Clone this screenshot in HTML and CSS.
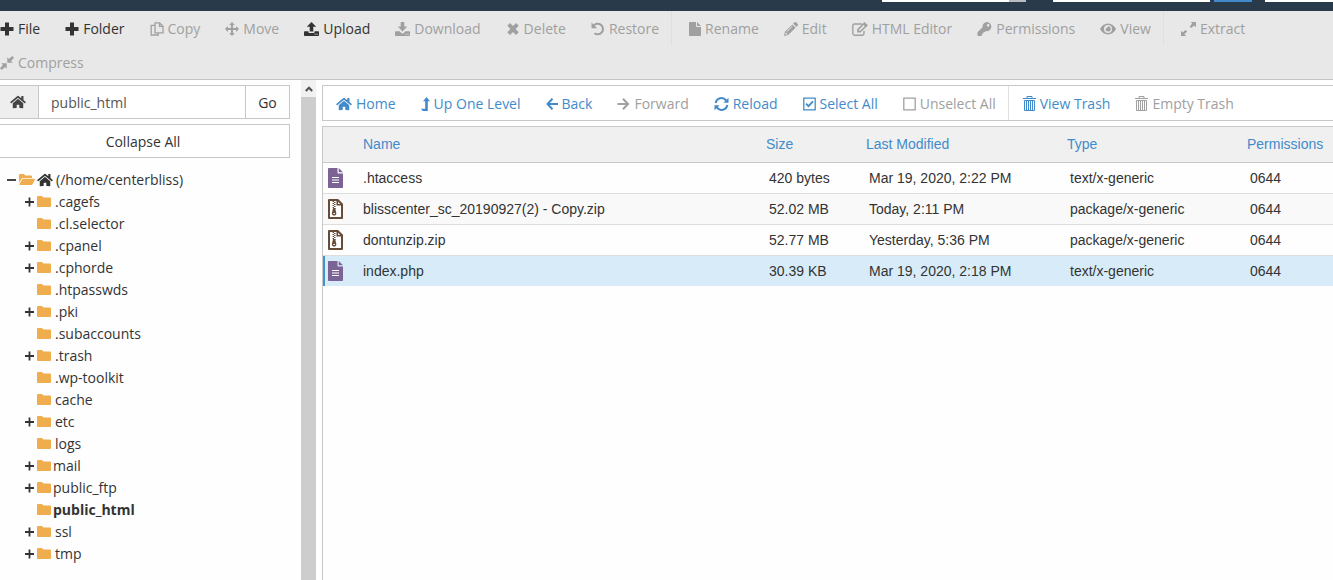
FILE: index.html
```html
<!DOCTYPE html>
<html lang="en">
<head>
<meta charset="utf-8">
<title>File Manager</title>
<link rel="stylesheet" href="styles.css">
</head>
<body>
<svg class="sprite" aria-hidden="true">
  <symbol id="plus" viewBox="0 0 14 14"><path d="M5 .5h4V5h4.500v4H9v4.500H5V9H.5V5H5z"/></symbol>
  <symbol id="copy" viewBox="0 0 14 14"><path fill="none" stroke="currentColor" stroke-width="1.300" d="M4.500 3.400H1.200v9.600h7V11M9.600.8H5v10h8V4.200L9.600.8zM9.500 1v3.400H13"/></symbol>
  <symbol id="move" viewBox="0 0 14 14"><path d="M7 0l2.900 2.900H8V6h3.100V4.100L14 7l-2.900 2.900V8H8v3.100h1.900L7 14l-2.900-2.900H6V8H2.900v1.900L0 7l2.900-2.900V6H6V2.900H4.100z"/></symbol>
  <symbol id="upload" viewBox="0 0 15 14"><path d="M7.500 0l4.700 4.800H9.300v4.700H5.700V4.800H2.800zM.7 9.300h3.800v.9c0 .4.300.7.700.7h4.600c.4 0 .7-.3.700-.7v-.9h3.800c.4 0 .7.300.7.700v3.300c0 .4-.3.700-.7.700H.7c-.4 0-.7-.3-.7-.7V10c0-.4.300-.7.700-.7zM10.600 11.700v1h1v-1zM12.600 11.700v1h1v-1z" fill-rule="evenodd"/></symbol>
  <symbol id="download" viewBox="0 0 15 14"><path d="M5.700 0h3.600v4.600h2.900L7.500 9.400 2.800 4.600h2.900zM.7 9.200h3.900l1.700 1.700c.7.700 1.700.7 2.400 0l1.700-1.700h3.900c.4 0 .7.300.7.700v3.400c0 .4-.3.700-.7.700H.7c-.4 0-.7-.3-.7-.7V9.900c0-.4.300-.7.700-.7zM10.600 11.700v1h1v-1zM12.600 11.700v1h1v-1z" fill-rule="evenodd"/></symbol>
  <symbol id="times" viewBox="0 0 12 14"><path d="M3 1l3 3 3-3 2.700 2.700L8.600 7l3.100 3.300L9 13l-3-3-3 3L.3 10.300 3.400 7 .3 3.700z"/></symbol>
  <symbol id="undo" viewBox="0 0 14 14"><path fill="none" stroke="currentColor" stroke-width="2" d="M2.200 4.200A5.300 5.300 0 1 1 3.400 11.200"/><path d="M.5.500v5.700h5.700z"/></symbol>
  <symbol id="file" viewBox="0 0 12 14"><path d="M1 0h6v4c0 .6.400 1 1 1h4v8.200c0 .5-.3.800-.8.800H.8c-.5 0-.8-.3-.8-.8V1c0-.6.400-1 1-1zM8 0l4 4H8z"/></symbol>
  <symbol id="pencil" viewBox="0 0 14 14"><path d="M8.300 2.400l3.300 3.300-7.400 7.400L0 14l.9-4.200zM9.100 1.600L10.200.5c.7-.7 1.500-.7 2.100 0l1.200 1.200c.7.700.7 1.500 0 2.100l-1.100 1.100zM1.800 10.200l-.4 2.400 2.400-.4zM8 4l-5.300 5.300.5.500L8.500 4.500z" fill-rule="evenodd"/></symbol>
  <symbol id="edit" viewBox="0 0 16 14"><path fill="none" stroke="currentColor" stroke-width="1.400" d="M10 2H2.500C1.500 2 .8 2.700.8 3.600v7.900c0 1 .7 1.700 1.700 1.700h7.800c1 0 1.700-.7 1.700-1.700V9"/><path d="M12.400 0L16 3.300 8.500 10.500H5.200V7.200zM11.500 3L6.700 7.900l1.200 1.200 4.900-4.800z" fill-rule="evenodd"/></symbol>
  <symbol id="key" viewBox="0 0 14 14"><path d="M9.400 0A4.600 4.600 0 1 1 8.300 9.100L7.400 10H6v1.500H4.500V13L3.800 14H.5L0 13.500v-3.200l5-5A4.600 4.600 0 0 1 9.400 0zM10.600 2a1.300 1.300 0 1 0 0 2.700 1.300 1.300 0 0 0 0-2.700z" fill-rule="evenodd"/></symbol>
  <symbol id="eye" viewBox="0 0 16 14"><path fill-rule="evenodd" d="M8 1.500c3.500 0 6.300 2.100 8 5.500-1.700 3.400-4.500 5.500-8 5.500S1.700 10.400 0 7c1.700-3.400 4.500-5.500 8-5.500zM8 3a4 4 0 1 0 0 8 4 4 0 0 0 0-8zM8 4.300c-.2.900-.8 1.900-2.400 2.400A2.600 2.600 0 1 0 8 4.300z"/></symbol>
  <symbol id="expand" viewBox="0 0 15 14"><path d="M9.500 0H15v5.200l-1.800-1.800-3 2.700-1.600-1.600 2.800-2.900zM0 8.800l1.700 1.700 2.800-2.600 1.600 1.600-2.800 2.700L5.200 14H0z"/></symbol>
  <symbol id="compress" viewBox="0 0 14 14"><path d="M7.300 1.200l1.700 1.700L12.200 0 14 1.800 11.100 5l1.700 1.700H7.300zM1.200 7.300h5.500v5.500L5 11.100 1.800 14 0 12.200 2.900 9z"/></symbol>
  <symbol id="home" viewBox="0 0 576 512"><path d="M280.370 148.260L96 300.110V464a16 16 0 0 0 16 16l112.060-.29a16 16 0 0 0 15.920-16V368a16 16 0 0 1 16-16h64a16 16 0 0 1 16 16v95.640a16 16 0 0 0 16 16.050L464 480a16 16 0 0 0 16-16V300L295.670 148.260a12.190 12.190 0 0 0-15.300 0zM571.600 251.470L488 182.560V44.050a12 12 0 0 0-12-12h-56a12 12 0 0 0-12 12v72.610L318.470 43a48 48 0 0 0-61 0L4.340 251.470a12 12 0 0 0-1.600 16.900l25.500 31A12 12 0 0 0 45.150 301l235.220-193.740a12.190 12.190 0 0 1 15.300 0L530.900 301a12 12 0 0 0 16.900-1.600l25.500-31a12 12 0 0 0-1.700-16.930z"/></symbol>
  <symbol id="up" viewBox="0 0 9 14"><path d="M5.500 0L9 4.300H6.800V14H1.700L0 11.700h4.200V4.300H2z"/></symbol>
  <symbol id="left" viewBox="0 0 12 14"><path fill="none" stroke="currentColor" stroke-width="2" d="M6.500 1.800L1.500 7l5 5.200M1.700 7H12"/></symbol>
  <symbol id="right" viewBox="0 0 12 14"><path fill="none" stroke="currentColor" stroke-width="2" d="M5.500 1.800l5 5.200-5 5.200M10.300 7H0"/></symbol>
  <symbol id="reload" viewBox="0 0 14 14"><path fill="none" stroke="currentColor" stroke-width="2" d="M1.200 6A5.800 5.800 0 0 1 11.700 3.600M12.800 8A5.800 5.800 0 0 1 2.300 10.400"/><path d="M14 .7v5H9zM0 13.300v-5h5z"/></symbol>
  <symbol id="checked" viewBox="0 0 13 14"><path fill="none" stroke="currentColor" stroke-width="1.300" d="M.8 1.200h11.400v11.600H.8z"/><path fill="none" stroke="currentColor" stroke-width="1.800" d="M3 6.600l2.500 2.600L10 4.400"/></symbol>
  <symbol id="unchecked" viewBox="0 0 13 14"><path fill="none" stroke="currentColor" stroke-width="1.300" d="M.8 1.200h11.400v11.600H.8z"/></symbol>
  <symbol id="trash" viewBox="0 0 13 16"><path fill="none" stroke="currentColor" d="M0 2.500h13M4 2V.5h5V2M1.500 4.500h10v10h-10zM3.500 5v9M5.500 5v9M7.500 5v9M9.500 5v9"/></symbol>
  <symbol id="folder" viewBox="0 0 14 12"><path d="M1.200 0H5l1.600 1.500h6.200c.7 0 1.200.5 1.200 1.100v7.300c0 .6-.5 1.100-1.200 1.100H1.200C.5 11 0 10.500 0 9.900V1.100C0 .5.500 0 1.200 0z"/></symbol>
  <symbol id="folder-open" viewBox="0 0 16 12"><path d="M0 8.800V1.200C0 .5.500 0 1.200 0h3.600l1.500 1.500h5.500c.7 0 1.200.5 1.200 1.200v1.200H4.300c-.8 0-1.500.4-1.900 1zM4.300 4.700h11c.5 0 .8.500.6.900l-2.300 4.700c-.2.400-.6.700-1.100.7H1c-.5 0-.8-.5-.6-.9l2.700-4.700c.2-.4.700-.7 1.200-.7z"/></symbol>
  <symbol id="text-file" viewBox="0 0 15 20"><path fill="#7c6396" d="M1 0h8.500v4.500c0 .6.400 1 1 1H15V19c0 .6-.4 1-1 1H1c-.6 0-1-.4-1-1V1c0-.6.400-1 1-1zM10.700 0L15 4.300h-4.300z"/><path stroke="#fff" stroke-width="1.200" d="M4 9.500h7M4 12h7M4 14.500h7"/></symbol>
  <symbol id="zip-file" viewBox="0 0 15 20"><path fill="#fff" stroke="#654b38" stroke-width="2" stroke-linejoin="round" d="M1 1h8.700L14 5.300V19H1z"/><path fill="none" stroke="#654b38" stroke-width="1.600" d="M9.300 1v4.800H14"/><path fill="none" stroke="#654b38" stroke-width="1.500" stroke-dasharray="1 1" d="M5.300 2v8M6.800 3v7"/><path fill="#654b38" d="M5 9h2.200l1.100 5.200c.3 3.200-4.700 3.200-4.400 0z"/><path stroke="#fff" d="M5.300 14.500h1.700"/></symbol>
  <symbol id="node-plus" viewBox="0 0 9 10"><path stroke="currentColor" stroke-width="1.800" d="M0 5h9M4.500.5v9"/></symbol>
  <symbol id="node-minus" viewBox="0 0 9 10"><path stroke="currentColor" stroke-width="1.800" d="M0 5h9"/></symbol>
  <symbol id="chevron" viewBox="0 0 8 6"><path fill="none" stroke="currentColor" stroke-width="2" d="M.8 5L4 1.700 7.200 5"/></symbol>
</svg>

<header class="topbar">
  <select class="search-scope" aria-label="Search scope"></select>
  <input class="search-text" type="text" aria-label="Search">
  <button class="search-go" type="button" aria-label="Search"></button>
  <button class="settings" type="button" aria-label="Settings"></button>
</header>

<nav class="toolbar">
  <div class="actions">
    <button class="action"><svg class="w14"><use href="#plus"/></svg>File</button>
    <button class="action"><svg class="w14"><use href="#plus"/></svg>Folder</button>
    <button class="action" disabled><svg class="w14"><use href="#copy"/></svg>Copy</button>
    <button class="action" disabled><svg class="w14"><use href="#move"/></svg>Move</button>
    <button class="action"><svg class="w15"><use href="#upload"/></svg>Upload</button>
    <button class="action" disabled><svg class="w15"><use href="#download"/></svg>Download</button>
    <button class="action" disabled><svg class="w14"><use href="#times"/></svg>Delete</button>
    <button class="action" disabled><svg class="w14"><use href="#undo"/></svg>Restore</button>
    <button class="action divided" disabled><svg class="w12"><use href="#file"/></svg>Rename</button>
    <button class="action" disabled><svg class="w14"><use href="#pencil"/></svg>Edit</button>
    <button class="action" disabled><svg class="w16"><use href="#edit"/></svg>HTML Editor</button>
    <button class="action" disabled><svg class="w15"><use href="#key"/></svg>Permissions</button>
    <button class="action" disabled><svg class="w16"><use href="#eye"/></svg>View</button>
    <button class="action divided" disabled><svg class="w15"><use href="#expand"/></svg>Extract</button>
    <button class="action" disabled><svg class="w14"><use href="#compress"/></svg>Compress</button>
  </div>
</nav>

<div class="workspace">
  <aside class="sidebar">
    <form class="path">
      <button class="path-home" type="button" aria-label="Home"><svg class="w16"><use href="#home"/></svg></button>
      <input class="path-text" type="text" value="public_html" aria-label="Path">
      <button class="path-go" type="button">Go</button>
    </form>
    <button class="collapse" type="button">Collapse All</button>
    <ul class="tree">
      <li class="node root"><svg class="toggle"><use href="#node-minus"/></svg><svg class="open-folder"><use href="#folder-open"/></svg><svg class="w16"><use href="#home"/></svg><span>(/home/centerbliss)</span></li>
      <li class="node"><svg class="toggle"><use href="#node-plus"/></svg><svg class="folder"><use href="#folder"/></svg><span>.cagefs</span></li>
      <li class="node"><svg class="toggle"></svg><svg class="folder"><use href="#folder"/></svg><span>.cl.selector</span></li>
      <li class="node"><svg class="toggle"><use href="#node-plus"/></svg><svg class="folder"><use href="#folder"/></svg><span>.cpanel</span></li>
      <li class="node"><svg class="toggle"><use href="#node-plus"/></svg><svg class="folder"><use href="#folder"/></svg><span>.cphorde</span></li>
      <li class="node"><svg class="toggle"></svg><svg class="folder"><use href="#folder"/></svg><span>.htpasswds</span></li>
      <li class="node"><svg class="toggle"><use href="#node-plus"/></svg><svg class="folder"><use href="#folder"/></svg><span>.pki</span></li>
      <li class="node"><svg class="toggle"></svg><svg class="folder"><use href="#folder"/></svg><span>.subaccounts</span></li>
      <li class="node"><svg class="toggle"><use href="#node-plus"/></svg><svg class="folder"><use href="#folder"/></svg><span>.trash</span></li>
      <li class="node"><svg class="toggle"></svg><svg class="folder"><use href="#folder"/></svg><span>.wp-toolkit</span></li>
      <li class="node"><svg class="toggle"></svg><svg class="folder"><use href="#folder"/></svg><span>cache</span></li>
      <li class="node"><svg class="toggle"><use href="#node-plus"/></svg><svg class="folder"><use href="#folder"/></svg><span>etc</span></li>
      <li class="node"><svg class="toggle"></svg><svg class="folder"><use href="#folder"/></svg><span>logs</span></li>
      <li class="node special"><svg class="toggle"><use href="#node-plus"/></svg><svg class="folder"><use href="#folder"/></svg><span>mail</span></li>
      <li class="node special"><svg class="toggle"><use href="#node-plus"/></svg><svg class="folder"><use href="#folder"/></svg><span>public_ftp</span></li>
      <li class="node special current"><svg class="toggle"></svg><svg class="folder"><use href="#folder"/></svg><span>public_html</span></li>
      <li class="node"><svg class="toggle"><use href="#node-plus"/></svg><svg class="folder"><use href="#folder"/></svg><span>ssl</span></li>
      <li class="node"><svg class="toggle"><use href="#node-plus"/></svg><svg class="folder"><use href="#folder"/></svg><span>tmp</span></li>
    </ul>
  </aside>
  <div class="scrollbar" aria-hidden="true">
    <div class="scroll-up"><svg><use href="#chevron"/></svg></div>
    <div class="scroll-thumb"></div>
  </div>
  <main class="content">
    <div class="actions links">
      <button class="action"><svg class="w16"><use href="#home"/></svg>Home</button>
      <button class="action"><svg class="w9"><use href="#up"/></svg>Up One Level</button>
      <button class="action"><svg class="w12"><use href="#left"/></svg>Back</button>
      <button class="action" disabled><svg class="w13"><use href="#right"/></svg>Forward</button>
      <button class="action"><svg class="w15"><use href="#reload"/></svg>Reload</button>
      <button class="action"><svg class="w13"><use href="#checked"/></svg>Select All</button>
      <button class="action" disabled><svg class="w13"><use href="#unchecked"/></svg>Unselect All</button>
      <button class="action divided"><svg class="bin"><use href="#trash"/></svg>View Trash</button>
      <button class="action" disabled><svg class="bin"><use href="#trash"/></svg>Empty Trash</button>
    </div>
    <div class="listing">
      <table class="files">
        <colgroup><col class="c-icon"><col><col class="c-size"><col class="c-date"><col class="c-type"><col class="c-perm"></colgroup>
        <thead><tr><th></th><th>Name</th><th>Size</th><th>Last Modified</th><th>Type</th><th>Permissions</th></tr></thead>
        <tbody>
          <tr><td><svg><use href="#text-file"/></svg></td><td>.htaccess</td><td>420 bytes</td><td>Mar 19, 2020, 2:22 PM</td><td>text/x-generic</td><td>0644</td></tr>
          <tr><td><svg><use href="#zip-file"/></svg></td><td>blisscenter_sc_20190927(2) - Copy.zip</td><td>52.02 MB</td><td>Today, 2:11 PM</td><td>package/x-generic</td><td>0644</td></tr>
          <tr><td><svg><use href="#zip-file"/></svg></td><td>dontunzip.zip</td><td>52.77 MB</td><td>Yesterday, 5:36 PM</td><td>package/x-generic</td><td>0644</td></tr>
          <tr class="selected"><td><svg><use href="#text-file"/></svg></td><td>index.php</td><td>30.39 KB</td><td>Mar 19, 2020, 2:18 PM</td><td>text/x-generic</td><td>0644</td></tr>
        </tbody>
      </table>
    </div>
  </main>
</div>
</body>
</html>
```
FILE: styles.css
```css
* { box-sizing: border-box; }

body {
  margin: 0;
  height: 100vh;
  display: flex;
  flex-direction: column;
  overflow: hidden;
  background: #fefefe;
  color: #333;
  font: 14px/20px "Open Sans", sans-serif;
}

button, input, select { margin: 0; font: inherit; color: inherit; border-radius: 0; }
svg { flex: none; fill: currentColor; }
.sprite { display: none; }

.w9 { width: 9px; }
.w12 { width: 12px; }
.w13 { width: 13px; }
.w14 { width: 14px; }
.w15 { width: 15px; }
.w16 { width: 16px; }

/* Top bar: the search controls hang from above */
.topbar {
  flex: none;
  display: flex;
  justify-content: flex-end;
  align-items: flex-end;
  height: 11px;
  padding-bottom: 9px;
  overflow: hidden;
  background: #293a4a;
}
.topbar > * { flex: none; height: 30px; border: 0; padding: 0; background: #fff; }
.topbar .search-scope { width: 144px; margin-right: 27px; appearance: none; border-right: 17px solid #b9bdc1; }
.search-text { width: 157px; margin-right: 4px; }
.topbar .search-go { width: 38px; margin-right: 13px; background: #428bca; }
.settings { width: 68px; }

/* Toolbars */
.toolbar {
  flex: none;
  overflow: hidden;
  background: #e8e8e8;
  border-bottom: 1px solid #c4c4c4;
}
.actions { display: flex; flex-wrap: wrap; }
.toolbar .actions { margin-left: -13px; }
.action {
  display: flex;
  align-items: center;
  gap: 4px;
  height: 34px;
  padding: 2px 12px 0 13px;
  border: 0;
  background: none;
  white-space: nowrap;
}
.action svg { height: 14px; }
.action svg.bin { width: 13px; height: 16px; }
.action:disabled { color: #a0a0a0; }
.divided { border-left: 1px solid #dfdfdf; padding-left: 17px; }

.workspace { flex: 1; display: flex; min-height: 0; }

/* Folder tree */
.sidebar { flex: none; width: 290px; margin-right: 11px; padding-top: 5px; }
.path { display: flex; height: 34px; border: 1px solid #c8c8c8; border-left: 0; }
.path button { border: 0; background: none; }
.path .path-home { width: 38px; padding: 0 0 0 10px; background: #eee; color: #444; }
.path-home svg { display: block; height: 14px; }
.path-text {
  flex: 1;
  min-width: 0;
  padding: 2px 12px 0;
  border: solid #c8c8c8;
  border-width: 0 1px;
  background: #fff;
  color: #555;
}
.path .path-go { width: 43px; padding: 2px 0 0; }
.collapse {
  display: block;
  width: 100%;
  height: 34px;
  margin-top: 5px;
  padding: 2px 3px 0 0;
  border: 1px solid #c8c8c8;
  border-left: 0;
  background: #fff;
}
.tree { margin: 0; padding: 11px 0 0; list-style: none; }
.node { display: flex; align-items: center; height: 22px; padding-left: 25px; white-space: nowrap; }
.node .toggle { width: 9px; height: 10px; margin-right: 3px; }
.node .folder { width: 14px; height: 12px; margin-right: 4px; color: #f0ad4e; }
.node.special .folder { margin-right: 2px; }
.node.root { padding-left: 7px; }
.root .open-folder { width: 16px; height: 12px; margin-right: 2px; color: #f0ad4e; }
.root .w16 { height: 14px; margin-right: 3px; }
.current { font-weight: 700; }

.scrollbar { flex: none; display: flex; flex-direction: column; width: 15px; background: #f1f1f1; }
.scroll-up { display: flex; align-items: center; justify-content: center; height: 17px; }
.scroll-up svg { width: 8px; height: 6px; color: #505050; }
.scroll-thumb { flex: 1; background: #cdcdcd; }

/* File listing */
.content { flex: 1; min-width: 0; display: flex; flex-direction: column; margin-left: 6px; padding-top: 5px; }
.links { flex: none; border: 1px solid #c8c8c8; border-right: 0; color: #428bca; background: #fff; }
.links .action { padding-top: 1px; }
.links .divided { padding-left: 14px; }
.listing {
  flex: 1;
  margin-top: 5px;
  border: solid #c8c8c8;
  border-width: 1px 0 0 1px;
  font-family: "Liberation Sans", Arial, sans-serif;
}
.files { width: 100%; table-layout: fixed; border-collapse: collapse; }
.c-icon { width: 40px; }
.c-size { width: 100px; }
.c-date { width: 201px; }
.c-type { width: 180px; }
.c-perm { width: 86px; }
.files th, .files td { padding: 0; text-align: left; font-weight: 400; white-space: nowrap; }
.files th { height: 35px; background: #f0f0f0; border-bottom: 1px solid #c8c8c8; color: #428bca; }
.files td { height: 31px; padding-left: 3px; border-bottom: 1px solid #ddd; }
.files td:first-child { padding-left: 5px; }
.files td:nth-child(2) { padding-left: 0; }
.files td svg { display: block; width: 15px; height: 20px; }
.files tbody tr:nth-child(even) { background: #f9f9f9; }
.files tbody tr:nth-child(3) { background: #fefefe; }
.files tbody tr.selected { background: #d7ecf8; box-shadow: inset 2px 0 #4193c9; }
.files .selected td { border-bottom: 0; }
```
